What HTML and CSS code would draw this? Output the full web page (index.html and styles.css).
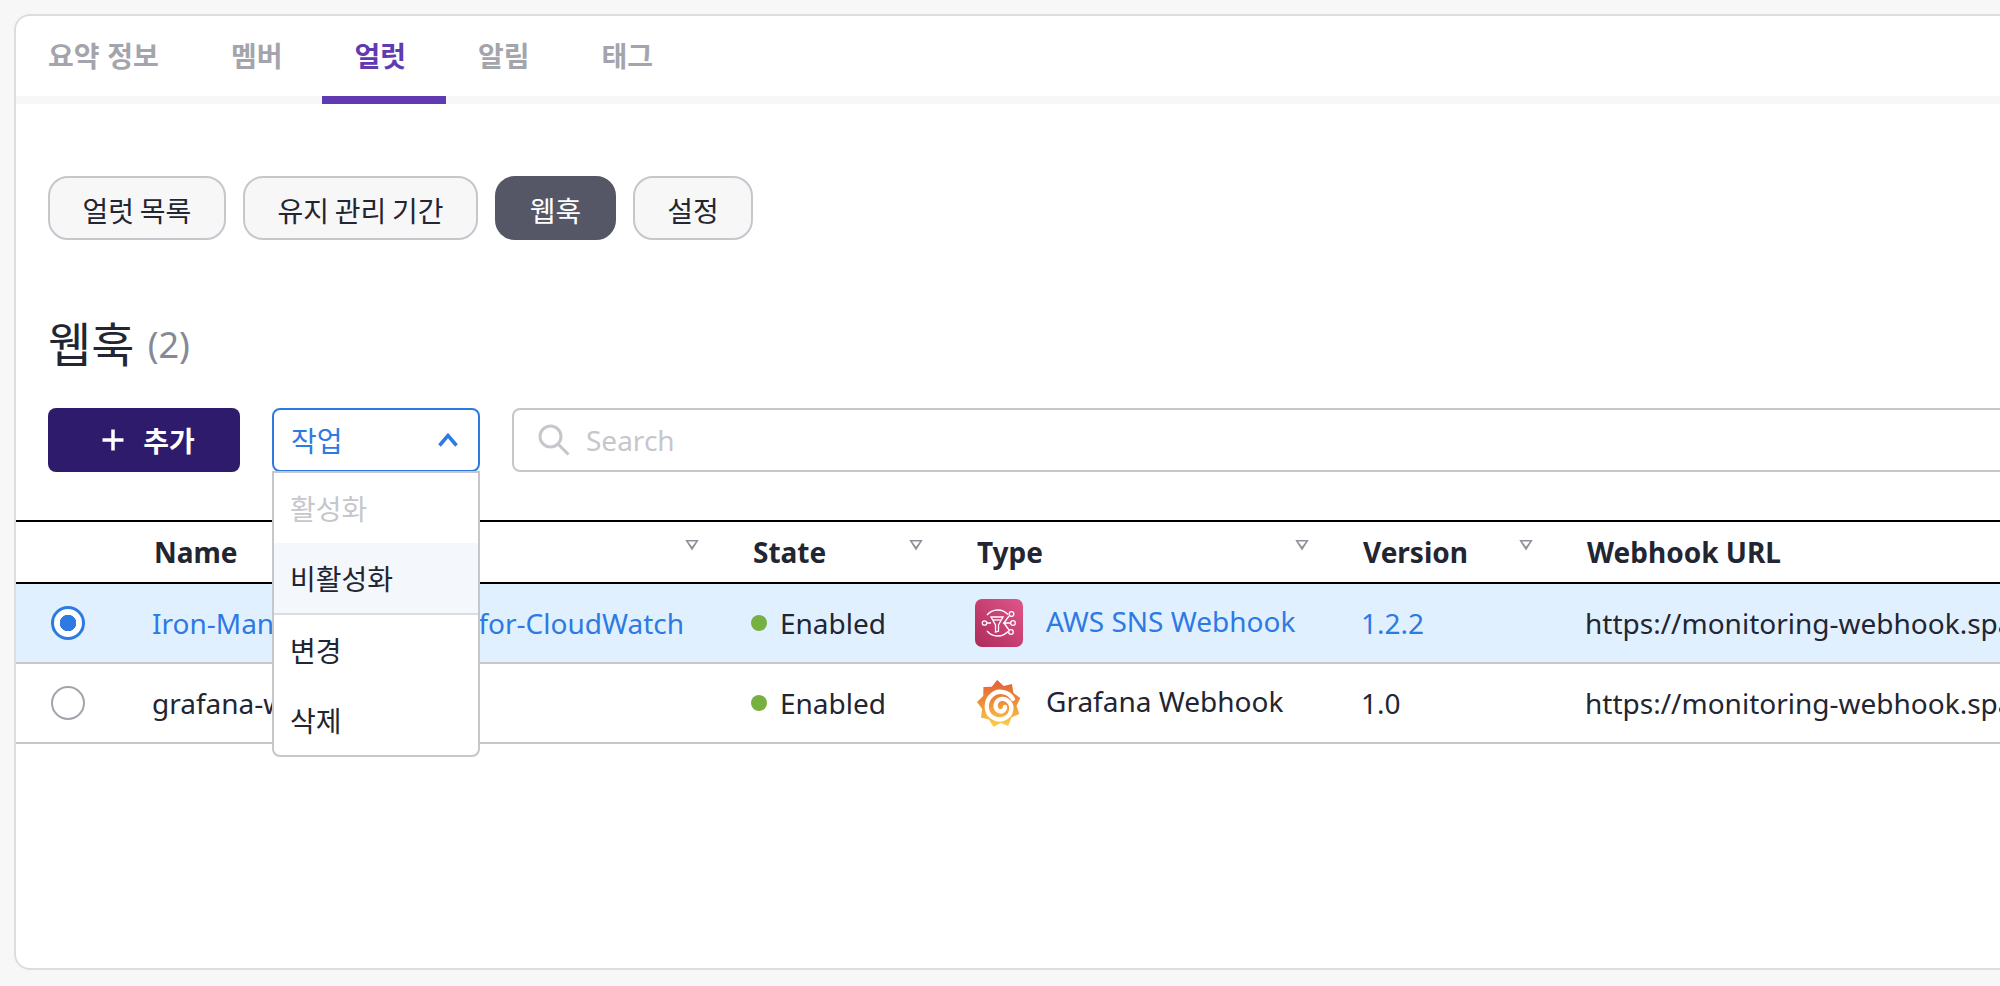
FILE: index.html
```html
<!DOCTYPE html>
<html lang="ko">
<head>
<meta charset="utf-8">
<title>웹훅</title>
<link rel="stylesheet" href="styles.css">
</head>
<body>
<main class="card">
  <nav class="tabs">
    <a class="tab">요약 정보</a>
    <a class="tab">멤버</a>
    <a class="tab tab-active">얼럿</a>
    <a class="tab">알림</a>
    <a class="tab">태그</a>
  </nav>
  <div class="filters">
    <button class="pill">얼럿 목록</button>
    <button class="pill">유지 관리 기간</button>
    <button class="pill pill-active">웹훅</button>
    <button class="pill">설정</button>
  </div>
  <h1 class="title">웹훅 <span class="count">(2)</span></h1>
  <div class="toolbar">
    <button class="add-btn">
      <svg class="plus" viewBox="0 0 24 24"><path d="M12 1.500v21M1.500 12h21"/></svg>
      <span>추가</span>
    </button>
    <div class="select">
      <button class="select-btn">
        <span>작업</span>
        <svg class="chevron" viewBox="0 0 20 14"><path d="M1.500 12.500L10 2.500l8.500 10"/></svg>
      </button>
      <ul class="menu">
        <li class="menu-item menu-disabled">활성화</li>
        <li class="menu-item menu-hover">비활성화</li>
        <li class="menu-item menu-sep">변경</li>
        <li class="menu-item">삭제</li>
      </ul>
    </div>
    <div class="search">
      <svg class="search-icon" viewBox="0 0 32 32"><circle cx="12.500" cy="12.500" r="10.500"/><path d="M20 20l10.500 10.500"/></svg>
      <span>Search</span>
    </div>
  </div>
  <table class="grid">
    <colgroup>
      <col class="c-sel"><col class="c-name"><col class="c-state"><col class="c-type"><col class="c-ver"><col class="c-url">
    </colgroup>
    <thead>
      <tr>
        <th></th>
        <th><div class="th-in">Name<i class="sort"></i></div></th>
        <th><div class="th-in">State<i class="sort"></i></div></th>
        <th><div class="th-in">Type<i class="sort"></i></div></th>
        <th><div class="th-in">Version<i class="sort"></i></div></th>
        <th><div class="th-in">Webhook URL</div></th>
      </tr>
    </thead>
    <tbody>
      <tr class="row-selected">
        <td class="sel"><span class="radio radio-on"></span></td>
        <td class="link">Iron-Man-SQS-Webhook-for-CloudWatch</td>
        <td><span class="state"><i class="dot"></i>Enabled</span></td>
        <td>
          <span class="type">
            <svg class="type-icon" viewBox="0 0 48 48">
              <defs><linearGradient id="sns" x1="0" y1="1" x2="1" y2="0"><stop offset="0" stop-color="#ad2b5a"/><stop offset="1" stop-color="#e0568a"/></linearGradient></defs>
              <rect width="48" height="48" rx="7" fill="url(#sns)"/>
              <g fill="none" stroke="#fff" stroke-width="1.300">
                <path d="M33 15.500A14 14 0 0 0 12 16M12 32a14 14 0 0 0 21 .5"/>
                <circle cx="9.500" cy="24" r="2.200"/><circle cx="36.500" cy="15" r="2.300"/><circle cx="38" cy="24" r="2.300"/><circle cx="36" cy="33" r="2.300"/>
                <path d="M12 24h4M28 24h8M29 24l5-7M29 24l5 7"/>
                <path d="M16 18h12l-4.500 8v6l-3 1v-7z"/><path d="M18 21h8"/>
              </g>
            </svg>
            <span class="type-name link-text">AWS SNS Webhook</span>
          </span>
        </td>
        <td class="link">1.2.2</td>
        <td class="url">https://monitoring-webhook.spaceone.dev/monitoring/v1/webhook</td>
      </tr>
      <tr>
        <td class="sel"><span class="radio"></span></td>
        <td>grafana-webhook</td>
        <td><span class="state"><i class="dot"></i>Enabled</span></td>
        <td>
          <span class="type">
            <svg class="type-icon" viewBox="0 0 48 48">
              <defs><linearGradient id="gf" x1="0" y1="0" x2="0" y2="1"><stop offset="0" stop-color="#e2603a"/><stop offset=".45" stop-color="#ee8a35"/><stop offset="1" stop-color="#fbd24b"/></linearGradient></defs>
              <path fill="url(#gf)" transform="translate(2 0) scale(.92 1)" d="M22 1l7 6 9-2 1.600 9L47 19l-4 8 3 8-8.600 3.400L34 47l-8.300-3L18 48l-5-7.400-8.700-1.800L5.600 30 0 23l6.800-6L7 8l9-.2z"/>
              <path fill="none" stroke="#fff" stroke-width="4.300" stroke-linecap="round" d="M38 20C34 13 23 10 17 16 10 22 10 33 17 38 24 43 34 40 36 32 38 25 32 19 26 20 21 21 19 27 22 31 25 34 30 32 30 28"/>
            </svg>
            <span class="type-name">Grafana Webhook</span>
          </span>
        </td>
        <td>1.0</td>
        <td class="url">https://monitoring-webhook.spaceone.dev/monitoring/v1/webhook</td>
      </tr>
    </tbody>
  </table>
</main>
</body>
</html>
```
FILE: styles.css
```css
* { box-sizing: border-box; }
html, body { margin: 0; height: 986px; overflow: hidden; }
body {
  background: #f7f7f8;
  color: #222532;
  font-family: "Noto Sans", "Noto Sans CJK KR", sans-serif;
  font-size: 28px;
  padding: 14px 0 16px 14px;
}
button { font: inherit; color: inherit; cursor: pointer; }

.card {
  width: 2300px;
  height: 956px;
  background: #fff;
  border: 2px solid #dddde1;
  border-radius: 16px;
}

.tabs {
  display: flex;
  height: 88px;
  border-bottom: 8px solid #f7f7f8;
  font-family: "Noto Sans CJK KR", sans-serif;
  font-weight: 700;
  color: #a4a4ad;
}
.tab {
  height: 88px;
  padding: 0 40px 2px 32px;
  display: flex;
  align-items: center;
  border-bottom: 8px solid transparent;
}
.tab-active { color: #5f3ab0; border-bottom-color: #5f3ab0; }

.filters {
  display: flex;
  gap: 17px;
  padding: 72px 0 0 32px;
}
.pill {
  height: 64px;
  padding: 3px 32.500px 0;
  background: #f7f7f8;
  border: 2px solid #c6c6cc;
  border-radius: 20px;
  font-family: "Noto Sans CJK KR", sans-serif;
  font-size: 28px;
  word-spacing: -2px;
}
.pill-active { background: #555766; border-color: #555766; color: #fff; }

.title {
  margin: 0;
  padding: 70px 0 0 32px;
  height: 168px;
  font-size: 47px;
  line-height: 68px;
  font-weight: 400;
  font-family: "Noto Sans", "Noto Sans CJK KR", sans-serif;
}
.count { font-size: 36px; color: #858895; margin-left: 1px; vertical-align: 4px; }

.toolbar {
  display: flex;
  gap: 32px;
  height: 112px;
  padding: 0 0 48px 32px;
  position: relative;
  z-index: 2;
}
.add-btn {
  width: 192px;
  height: 64px;
  display: flex;
  align-items: center;
  justify-content: center;
  gap: 18px;
  padding: 0 0 0 8px;
  background: #2f1b6b;
  color: #fff;
  border: 0;
  border-radius: 8px;
  font-family: "Noto Sans CJK KR", sans-serif;
  font-weight: 700;
  font-size: 28px;
}
.plus { width: 24px; height: 24px; fill: none; stroke: #fff; stroke-width: 3.500; }

.select { position: relative; width: 208px; }
.select-btn {
  width: 100%;
  height: 64px;
  padding: 0 20px 0 17px;
  display: flex;
  align-items: center;
  justify-content: space-between;
  background: #fff;
  color: #2d7ae3;
  border: 2px solid #2d7ae3;
  border-radius: 8px;
  font-family: "Noto Sans CJK KR", sans-serif;
}
.chevron { width: 20px; height: 14px; fill: none; stroke: #2d7ae3; stroke-width: 3.500; }
.menu {
  position: absolute;
  top: 63px;
  left: 0;
  width: 100%;
  margin: 0;
  padding: 0;
  list-style: none;
  background: #fff;
  border: 2px solid #c6c6cc;
  border-radius: 0 0 8px 8px;
  font-family: "Noto Sans CJK KR", sans-serif;
  overflow: hidden;
}
.menu-item {
  height: 70px;
  padding-left: 16px;
  display: flex;
  align-items: center;
}
.menu-disabled { color: #c6c6cc; }
.menu-hover { background: #f4f7fc; }
.menu-sep { border-top: 2px solid #dddde1; height: 72px; }

.search {
  width: 1600px;
  height: 64px;
  display: flex;
  align-items: center;
  gap: 16px;
  padding-left: 24px;
  border: 2px solid #c6c6cc;
  border-radius: 8px;
  color: #c6c6cc;
}
.search-icon { width: 32px; height: 32px; fill: none; stroke: #c6c6cc; stroke-width: 3; }

.grid {
  width: 2284px;
  table-layout: fixed;
  border-collapse: separate;
  border-spacing: 0;
  border-top: 2px solid #000;
}
.c-sel { width: 123px; }
.c-name { width: 599px; }
.c-state { width: 224px; }
.c-type { width: 386px; }
.c-ver { width: 224px; }

.grid th {
  height: 62px;
  padding: 0 0 0 15px;
  text-align: left;
  font-weight: 700;
  border-bottom: 2px solid #000;
}
.th-in {
  display: flex;
  align-items: center;
  justify-content: space-between;
  padding-right: 39px;
  height: 50px;
}
.sort {
  width: 14px;
  height: 11px;
  margin-top: -14px;
  background: #8f8f98;
  clip-path: polygon(0 0, 100% 0, 50% 100%, 0 0, 22% 18%, 50% 66%, 78% 18%, 22% 18%);
}
.grid td {
  height: 80px;
  padding: 0 0 0 13px;
  white-space: nowrap;
  border-bottom: 2px solid #c6c6cc;
}
.row-selected { background: #e1f0ff; }
.row-selected .link, .link-text { color: #2d7ae3; }

.grid .sel { padding: 0 0 0 35px; }
.radio {
  display: block;
  width: 34px;
  height: 34px;
  border: 2px solid #a4a4ad;
  border-radius: 50%;
  background: #fff;
}
.radio-on {
  border: 3px solid #2d7ae3;
  background: radial-gradient(circle, #2d7ae3 0 8px, #fff 8.500px);
}

.state { display: flex; align-items: center; gap: 13px; }
.dot { width: 16px; height: 16px; border-radius: 50%; background: #76b041; margin-top: -1px; }

.type { display: flex; align-items: center; gap: 23px; }
.type-icon { width: 48px; height: 48px; flex: none; }
.type-name { margin-top: -5px; }
```
